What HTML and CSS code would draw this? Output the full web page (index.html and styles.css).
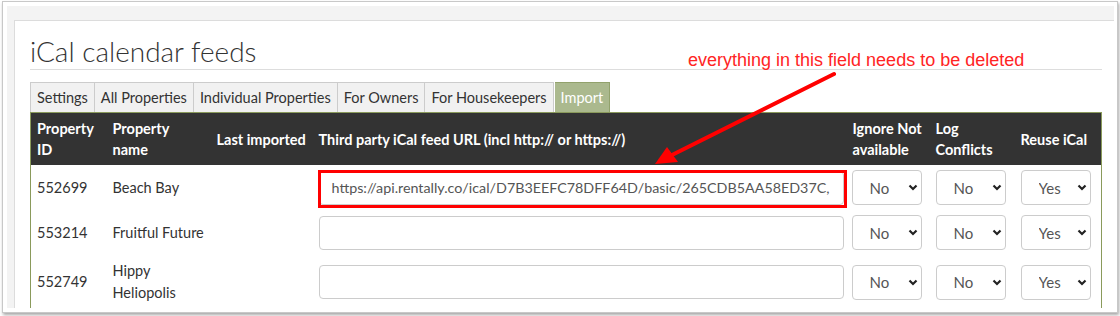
FILE: index.html
```html
<!DOCTYPE html>
<html lang="en">
<head>
  <meta charset="UTF-8">
  <title>iCal calendar feeds</title>
  <link rel="stylesheet" href="styles.css">
</head>
<body>
  <div class="frame">
    <div class="shell">
      <div class="panel">
        <h1 class="title">iCal calendar feeds</h1>
        <ul class="tabs">
          <li>Settings</li>
          <li>All Properties</li>
          <li>Individual Properties</li>
          <li>For Owners</li>
          <li>For Housekeepers</li>
          <li class="active">Import</li>
        </ul>
        <table class="feeds">
          <colgroup>
            <col class="c-id"><col class="c-name"><col class="c-last"><col class="c-url"><col class="c-ignore"><col class="c-log"><col class="c-reuse">
          </colgroup>
          <thead>
            <tr>
              <th>Property ID</th>
              <th>Property name</th>
              <th class="nowrap">Last imported</th>
              <th>Third party iCal feed URL (incl http:// or https://)</th>
              <th class="tight">Ignore Not available</th>
              <th>Log Conflicts</th>
              <th>Reuse iCal</th>
            </tr>
          </thead>
          <tbody>
            <tr>
              <td>552699</td>
              <td>Beach Bay</td>
              <td></td>
              <td><span class="field marked"><input type="text" value="https://api.rentally.co/ical/D7B3EEFC78DFF64D/basic/265CDB5AA58ED37C,"></span></td>
              <td><span class="pick"><select><option>No</option><option>Yes</option></select><svg viewBox="0 0 10 7"><polyline points="1.5,1.5 5,5 8.5,1.5"/></svg></span></td>
              <td><span class="pick"><select><option>No</option><option>Yes</option></select><svg viewBox="0 0 10 7"><polyline points="1.5,1.5 5,5 8.5,1.5"/></svg></span></td>
              <td><span class="pick"><select><option>Yes</option><option>No</option></select><svg viewBox="0 0 10 7"><polyline points="1.5,1.5 5,5 8.5,1.5"/></svg></span></td>
            </tr>
            <tr>
              <td>553214</td>
              <td>Fruitful Future</td>
              <td></td>
              <td><span class="field"><input type="text" value=""></span></td>
              <td><span class="pick"><select><option>No</option><option>Yes</option></select><svg viewBox="0 0 10 7"><polyline points="1.5,1.5 5,5 8.5,1.5"/></svg></span></td>
              <td><span class="pick"><select><option>No</option><option>Yes</option></select><svg viewBox="0 0 10 7"><polyline points="1.5,1.5 5,5 8.5,1.5"/></svg></span></td>
              <td><span class="pick"><select><option>Yes</option><option>No</option></select><svg viewBox="0 0 10 7"><polyline points="1.5,1.5 5,5 8.5,1.5"/></svg></span></td>
            </tr>
            <tr>
              <td>552749</td>
              <td>Hippy Heliopolis</td>
              <td></td>
              <td><span class="field"><input type="text" value=""></span></td>
              <td><span class="pick"><select><option>No</option><option>Yes</option></select><svg viewBox="0 0 10 7"><polyline points="1.5,1.5 5,5 8.5,1.5"/></svg></span></td>
              <td><span class="pick"><select><option>No</option><option>Yes</option></select><svg viewBox="0 0 10 7"><polyline points="1.5,1.5 5,5 8.5,1.5"/></svg></span></td>
              <td><span class="pick"><select><option>Yes</option><option>No</option></select><svg viewBox="0 0 10 7"><polyline points="1.5,1.5 5,5 8.5,1.5"/></svg></span></td>
            </tr>
          </tbody>
        </table>
      </div>
    </div>
  </div>
  <!-- annotation drawn over the screenshot -->
  <p class="note">everything in this field needs to be deleted</p>
  <svg class="arrow" viewBox="0 0 1120 316">
    <line x1="834" y1="74" x2="672" y2="155"/>
    <polygon points="655,164 667,147 678,162"/>
  </svg>
</body>
</html>
```

FILE: styles.css
```css
/*common*/
* {
  box-sizing: border-box;
  margin: 0;
  padding: 0;
}
body {
  position: relative;
  width: 1120px;
  height: 316px;
  background: #fff;
  font-family: Lato, "Noto Sans", sans-serif;
  font-size: 14.5px;
  color: #333;
  overflow: hidden;
}
.frame {
  width: 1116px;
  height: 312px;
  margin: 1px 0 0 2px;
  padding: 4px;
  border: 1px solid #c8c8c8;
  box-shadow: 1px 2px 3px rgba(0,0,0,.35);
  display: flex;
}
.shell {
  flex: 1;
  display: flex;
  background: #f3f3f3;
  padding: 14px 0 0 7px;
}
.panel {
  flex: 1;
  background: #fff;
  border-top: 1px solid #dcdcdc;
  border-left: 1px solid #dcdcdc;
  padding: 0 12px 0 15px;
  overflow: hidden;
}
.title {
  margin-top: 12px;
  font-size: 28px;
  font-weight: 300;
  line-height: 36px;
  color: #333;
  border-bottom: 1px solid #ddd;
}
/*tabs*/
.tabs {
  list-style: none;
  display: flex;
  margin-top: 12px;
}
.tabs li {
  height: 30px;
  line-height: 29px;
  padding: 0 6px;
  font-size: 14.5px;
  color: #333;
  background: #f1f1f1;
  border: 1px solid #ccc;
  border-left: none;
  border-bottom: none;
}
.tabs li:first-child {
  border-left: 1px solid #ccc;
}
.tabs li.active {
  background: #abb98e;
  border-color: #92a26c;
  color: #fff;
  margin-left: 1px;
}
/*table*/
.feeds {
  width: 1071px;
  table-layout: fixed;
  border-collapse: collapse;
  border: 1px solid #8a9a5b;
}
.c-id {width: 76px;}
.c-name {width: 104px;}
.c-last {width: 102px;}
.c-url {width: 534px;}
.c-ignore {width: 83px;}
.c-log {width: 85px;}
.c-reuse {width: 87px;}
.feeds th {
  background: #333;
  color: #fff;
  font-size: 14.5px;
  font-weight: 700;
  text-align: left;
  vertical-align: middle;
  line-height: 21px;
  padding: 5px 6px;
}
.feeds th.nowrap {
  white-space: nowrap;
}
.feeds th.tight {
  padding-right: 0;
}
.feeds td {
  vertical-align: middle;
  line-height: 22px;
  padding: 5px 6px;
}
.feeds td:nth-child(4) {
  padding: 5px 3px 5px 6px;
}
.feeds td:nth-child(5) {
  padding-left: 5px;
}
.field {
  display: block;
  position: relative;
}
.field input {
  display: block;
  width: 525px;
  height: 34px;
  padding: 0 12px;
  border: 1px solid #ccc;
  border-radius: 4px;
  font-family: inherit;
  font-size: 14.3px;
  color: #555;
}
.field.marked::after {
  content: "";
  position: absolute;
  top: -1px;
  left: -1px;
  right: -3px;
  bottom: -3px;
  border: 3px solid #f00;
}
.pick {
  display: inline-block;
  position: relative;
  vertical-align: middle;
}
.pick select {
  appearance: none;
  -webkit-appearance: none;
  display: block;
  width: 70px;
  height: 35px;
  padding: 0 22px 0 17px;
  border: 1px solid #ccc;
  border-radius: 4px;
  background: #fff;
  font-family: inherit;
  font-size: 15px;
  color: #555;
}
.pick svg {
  position: absolute;
  right: 4px;
  top: 14px;
  width: 10px;
  height: 7px;
  fill: none;
  stroke: #222;
  stroke-width: 2.2;
}
/*annotation*/
.note {
  position: absolute;
  left: 688px;
  top: 51px;
  font-family: "Liberation Sans", Arial, sans-serif;
  font-size: 18px;
  line-height: 18px;
  color: #ff2424;
  white-space: nowrap;
}
.arrow {
  position: absolute;
  left: 0;
  top: 0;
  width: 1120px;
  height: 316px;
  pointer-events: none;
}
.arrow line {
  stroke: #f00;
  stroke-width: 4;
  stroke-linecap: round;
}
.arrow polygon {
  fill: #f00;
}
```
